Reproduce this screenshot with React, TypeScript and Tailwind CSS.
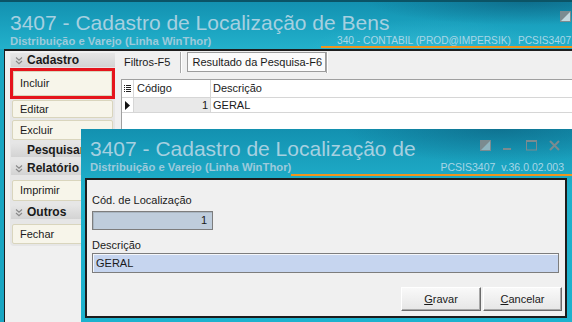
import React from "react";

const Chevron = () => (
  <svg width="8" height="9" viewBox="0 0 8 9" className="shrink-0">
    <path d="M1 1.5 L4 4.2 L7 1.5 M1 5 L4 7.7 L7 5" fill="none" stroke="#8a8a8a" strokeWidth="1.2" />
  </svg>
);

const RestoreIcon = ({ light }: { light: string }) => (
  <svg width="11" height="11" viewBox="0 0 11 11" className="shrink-0">
    <rect x="0" y="0" width="11" height="11" fill={light} />
    <polygon points="0,0 11,0 0,11" fill="#7b8b90" />
    <rect x="0.5" y="0.5" width="10" height="10" fill="none" stroke="#7b8b90" strokeWidth="1" />
  </svg>
);

function Header({ label, chevron = true }: { label: string; chevron?: boolean }) {
  return (
    <div className="h-[14px] ml-[1px] flex items-center rounded-t-[4px] bg-gradient-to-b from-[#e6e6e6] to-[#d3d3d3]">
      <div className="w-[16px] pl-[4px] flex items-center">{chevron && <Chevron />}</div>
      <span className="text-[12px] font-bold leading-none text-[#1a1a1a]">{label}</span>
    </div>
  );
}

function Item({ label, h }: { label: string; h: string }) {
  return (
    <div
      className={
        "mx-[2px] flex items-center pl-[7px] bg-[#f7f5ea] border border-[#d9d5bd] rounded-[2px] text-[11px] text-[#1a1a1a] " + h
      }
    >
      {label}
    </div>
  );
}

function Btn({ first, rest, w }: { first: string; rest: string; w: string }) {
  return (
    <div
      className={
        "h-[24px] flex items-center justify-center border border-t-white border-l-white border-r-[#6b6b6b] border-b-[#6b6b6b] bg-gradient-to-b from-[#f9f9f9] to-[#e6e6e6] shadow-[inset_-1px_-1px_0_#a8a8a8] text-[11px] text-[#1a1a1a] " +
        w
      }
    >
      <span>
        <span className="underline">{first}</span>
        {rest}
      </span>
    </div>
  );
}

export default function App() {
  return (
    <div className="relative w-[572px] h-[322px] overflow-hidden font-['Liberation_Sans',Arial,sans-serif] bg-[#1aa6c2]">
      {/* background window */}
      <div className="flex flex-col w-full h-full">
        <div className="h-[49px] shrink-0 flex flex-col pt-[9px] border-t-2 border-[#0b5466] bg-[radial-gradient(ellipse_40%_70%_at_92%_0%,rgba(8,70,100,0.45),transparent_70%),radial-gradient(ellipse_30%_90%_at_75%_100%,rgba(90,210,235,0.25),transparent_70%),linear-gradient(180deg,#1391b0_0%,#1ba3c0_55%,#23b1cb_100%)]">
          <div className="h-[24px] flex items-start pl-[10px] pr-[1px]">
            <span className="text-[21px] leading-[24px] text-[#a6d0e0] whitespace-nowrap">
              3407 - Cadastro de Localização de Bens
            </span>
            <div className="ml-auto">
              <RestoreIcon light="#c4d8de" />
            </div>
          </div>
          <div className="h-[13px] flex">
            <span className="pl-[10px] text-[11.3px] leading-[13px] font-bold text-[#9ccadb] whitespace-nowrap">
              Distribuição e Varejo (Linha WinThor)
            </span>
            <div className="ml-auto w-[251px] h-[13px] border-b-2 border-[#f0941c] flex pl-[16px] text-[10.2px] leading-[11px] text-[#a9d6e6] whitespace-nowrap">
              <span>340 - CONTABIL (PROD@IMPERSIK)</span>
              <span className="ml-[7px]">PCSIS3407</span>
            </div>
          </div>
        </div>

        <div className="flex-1 flex ml-[4px] border-l border-t-2 border-[#1e1e1e] bg-[#f0f0f0]">
          {/* left panel */}
          <div className="ml-[5px] mt-[2px] w-[105px] self-start flex flex-col bg-[#e6e6e6] rounded-b-[4px] pb-[2px]">
            <Header label="Cadastro" />
            <div className="mt-[1px] h-[31px] border-[3px] border-[#e5141c] flex">
              <div className="flex-1 flex items-center pl-[6px] bg-[#f7f5ea] border border-[#d9d5bd] text-[11px] text-[#1a1a1a]">
                Incluir
              </div>
            </div>
            <div className="mt-[1px]">
              <Item label="Editar" h="h-[18px]" />
            </div>
            <div className="mt-[2px]">
              <Item label="Excluir" h="h-[20px]" />
            </div>
            <div className="mt-[3px]">
              <Header label="Pesquisar" chevron={false} />
            </div>
            <div className="mt-[4px]">
              <Header label="Relatório" />
            </div>
            <div className="mt-[5px]">
              <Item label="Imprimir" h="h-[21px]" />
            </div>
            <div className="mt-[4px]">
              <Header label="Outros" />
            </div>
            <div className="mt-[5px]">
              <Item label="Fechar" h="h-[20px]" />
            </div>
          </div>

          {/* right content */}
          <div className="flex-1 flex flex-col pl-[6px]">
            <div className="h-[29px] shrink-0 flex items-start pt-[1px] pl-[3px] border-b border-[#a0a0a0]">
              <div className="h-[20px] flex items-center text-[11px] text-[#1a1a1a]">Filtros-F5</div>
              <div className="ml-[10px] h-[21px] w-[2px] border-l border-[#a8a8a8] border-r border-r-white" />
              <div className="ml-[5px] w-[139px] h-[20px] flex items-center pl-[4px] border border-[#9c9c9c] bg-[#fbfbfb] text-[11px] text-[#1a1a1a] whitespace-nowrap">
                Resultado da Pesquisa-F6
              </div>
              <div className="h-[21px] w-[2px] border-l border-[#a8a8a8] border-r border-r-white" />
            </div>
            <div className="flex-1 bg-white border-l border-[#a0a0a0] flex flex-col">
              <div className="h-[18px] flex border-b border-[#d6d6d6] text-[11px] text-[#1a1a1a]">
                <div className="w-[12px] border-r border-[#d6d6d6] flex items-center justify-center">
                  <svg width="7" height="8" viewBox="0 0 7 8">
                    <rect x="0" y="0" width="1" height="1" fill="#222" />
                    <rect x="2" y="0" width="5" height="1" fill="#222" />
                    <rect x="0" y="2" width="1" height="1" fill="#222" />
                    <rect x="2" y="2" width="5" height="1" fill="#222" />
                    <rect x="0" y="4" width="1" height="1" fill="#222" />
                    <rect x="2" y="4" width="5" height="1" fill="#222" />
                    <rect x="0" y="6" width="1" height="1" fill="#222" />
                    <rect x="2" y="6" width="5" height="1" fill="#222" />
                  </svg>
                </div>
                <div className="w-[77px] border-r border-[#d6d6d6] flex items-center pl-[3px]">Código</div>
                <div className="flex-1 flex items-center pl-[2px]">Descrição</div>
              </div>
              <div className="h-[15px] flex border-b border-[#d6d6d6] text-[11px] text-[#1a1a1a]">
                <div className="w-[12px] border-r border-[#d6d6d6] flex items-center justify-center">
                  <svg width="5" height="9" viewBox="0 0 5 9">
                    <polygon points="0,0 5,4.5 0,9" fill="#111" />
                  </svg>
                </div>
                <div className="w-[77px] border-r border-[#d6d6d6] bg-[#e9e9e9] flex items-center justify-end pr-[2px]">1</div>
                <div className="flex-1 flex items-center pl-[2px]">GERAL</div>
              </div>
            </div>
          </div>
        </div>
      </div>

      {/* dialog */}
      <div className="absolute left-[81px] top-[129px] w-[491px] h-[193px] flex flex-col bg-[radial-gradient(ellipse_45%_25%_at_85%_0%,rgba(8,70,100,0.4),transparent_70%),linear-gradient(180deg,#1391b0_0%,#1ba3c0_18%,#1fb0cb_30%,#1db2ce_100%)]">
        <div className="pt-[8px] shrink-0">
          <div className="h-[24px] flex items-start pl-[9px]">
            <span className="text-[21px] leading-[24px] text-[#a6d0e0] whitespace-nowrap">
              3407 - Cadastro de Localização de
            </span>
            <div className="ml-auto mt-[3px] mr-[12px] flex items-start">
              <RestoreIcon light="#8fb5c0" />
              <svg width="8" height="11" viewBox="0 0 8 11" className="ml-[12px]">
                <rect x="0" y="8" width="8" height="2" fill="#7b8b90" />
              </svg>
              <svg width="11" height="11" viewBox="0 0 11 11" className="ml-[15px]">
                <rect x="0.5" y="0.5" width="10" height="9.5" fill="none" stroke="#7b8b90" strokeWidth="1" />
                <rect x="0" y="0" width="11" height="2" fill="#7b8b90" />
              </svg>
              <svg width="11" height="11" viewBox="0 0 11 11" className="ml-[12px]">
                <path d="M1 1 L10 10 M10 1 L1 10" stroke="#7b8b90" strokeWidth="2" />
              </svg>
            </div>
          </div>
          <div className="h-[15px] flex">
            <span className="pl-[9px] text-[11.3px] leading-[13px] font-bold text-[#9ccadb] whitespace-nowrap">
              Distribuição e Varejo (Linha WinThor)
            </span>
            <div className="ml-auto w-[332px] h-[15px] border-b-2 border-[#f0941c] flex justify-end pr-[8px] pt-[1px] text-[10.5px] leading-[11px] text-[#a9d6e6] whitespace-nowrap">
              PCSIS3407&nbsp;&nbsp;v.36.0.02.003
            </div>
          </div>
        </div>
        <div className="mt-[2px] ml-[4px] mr-[5px] mb-[4px] flex-1 flex flex-col border-2 border-[#1c1c1c] bg-[#f0f0f0] pl-[5px] pt-[14px] text-[11px] text-[#1a1a1a]">
          <div className="leading-[13px]">Cód. de Localização</div>
          <div className="mt-[4px] w-[121px] h-[19px] border border-[#7d7d7d] shadow-[inset_1px_1px_0_#a9b6c2] bg-[#bfcddc] flex items-center justify-end pr-[5px]">
            1
          </div>
          <div className="mt-[9px] leading-[13px]">Descrição</div>
          <div className="mt-[1px] w-[467px] h-[20px] border border-[#7d7d7d] shadow-[inset_1px_1px_0_#f4f6fa] bg-[#c6d5ef] flex items-center pl-[3px]">
            GERAL
          </div>
          <div className="mt-[14px] flex justify-end gap-[2px] pr-[3px]">
            <Btn first="G" rest="ravar" w="w-[80px]" />
            <Btn first="C" rest="ancelar" w="w-[79px]" />
          </div>
        </div>
      </div>
    </div>
  );
}
